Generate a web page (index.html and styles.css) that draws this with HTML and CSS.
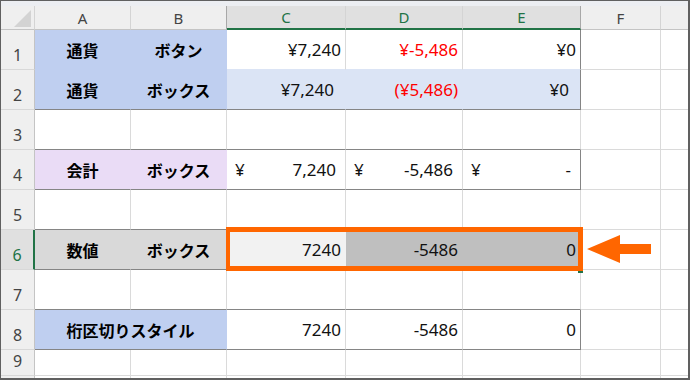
FILE: index.html
```html
<!DOCTYPE html>
<html lang="ja">
<head>
<meta charset="utf-8">
<title>Sheet</title>
<link rel="stylesheet" href="styles.css">
</head>
<body>
<div class="sheet">
  <div class="strip"></div>
  <div class="grid">
    <div class="cell hd corner"><svg class="tri" width="33" height="23" viewBox="0 0 33 23"><polygon points="30,4 30,21 13,21" fill="#d3d3d3"/></svg></div>
    <div class="cell hd">A</div>
    <div class="cell hd selL">B</div>
    <div class="cell hd sel">C</div>
    <div class="cell hd sel">D</div>
    <div class="cell hd sel selR">E</div>
    <div class="cell hd">F</div>
    <div class="cell hd g"></div>

    <div class="cell rh">1</div>
    <div class="cell jp blue">通貨</div>
    <div class="cell jp blue">ボタン</div>
    <div class="cell num bblb">¥7,240</div>
    <div class="cell num red bblb">¥-5,486</div>
    <div class="cell num bblb dr">¥0</div>
    <div class="cell"></div>
    <div class="cell g"></div>

    <div class="cell rh">2</div>
    <div class="cell jp blue db">通貨</div>
    <div class="cell jp blue db">ボックス</div>
    <div class="cell num lblue db pp">¥7,240</div>
    <div class="cell num lblue red db">(¥5,486)</div>
    <div class="cell num lblue db dr pp">¥0</div>
    <div class="cell"></div>
    <div class="cell g"></div>

    <div class="cell rh">3</div>
    <div class="cell db"></div>
    <div class="cell db"></div>
    <div class="cell db"></div>
    <div class="cell db"></div>
    <div class="cell db"></div>
    <div class="cell"></div>
    <div class="cell g"></div>

    <div class="cell rh">4</div>
    <div class="cell jp lav db">会計</div>
    <div class="cell jp lav db">ボックス</div>
    <div class="cell acc db"><span>¥</span><span>7,240</span></div>
    <div class="cell acc db"><span>¥</span><span>-5,486</span></div>
    <div class="cell acc db dr"><span>¥</span><span>-</span></div>
    <div class="cell"></div>
    <div class="cell g"></div>

    <div class="cell rh">5</div>
    <div class="cell db"></div>
    <div class="cell db"></div>
    <div class="cell db"></div>
    <div class="cell db"></div>
    <div class="cell db"></div>
    <div class="cell"></div>
    <div class="cell g"></div>

    <div class="cell rh rsel">6</div>
    <div class="cell jp gray db">数値</div>
    <div class="cell jp gray db">ボックス</div>
    <div class="cell num lgray db">7240</div>
    <div class="cell num dgray db">-5486</div>
    <div class="cell num dgray db dr">0</div>
    <div class="cell"></div>
    <div class="cell g"></div>

    <div class="cell rh">7</div>
    <div class="cell db"></div>
    <div class="cell db"></div>
    <div class="cell db"></div>
    <div class="cell db"></div>
    <div class="cell db"></div>
    <div class="cell"></div>
    <div class="cell g"></div>

    <div class="cell rh">8</div>
    <div class="cell jp blue db span2">桁区切りスタイル</div>
    <div class="cell num db">7240</div>
    <div class="cell num db">-5486</div>
    <div class="cell num db dr">0</div>
    <div class="cell"></div>
    <div class="cell g"></div>

    <div class="cell rh">9</div>
    <div class="cell"></div>
    <div class="cell"></div>
    <div class="cell"></div>
    <div class="cell"></div>
    <div class="cell"></div>
    <div class="cell"></div>
    <div class="cell g"></div>

    <div class="cell rh last"></div>
    <div class="cell last"></div>
    <div class="cell last"></div>
    <div class="cell last"></div>
    <div class="cell last"></div>
    <div class="cell last"></div>
    <div class="cell last"></div>
    <div class="cell g last"></div>
  </div>

  <div class="handle"></div>
  <div class="selbox"></div>
  <svg class="arrow" width="66" height="30" viewBox="0 0 66 30">
    <polygon points="1,15 34,1 34,10 65,10 65,20 34,20 34,29" fill="#ff6600"/>
  </svg>
</div>
</body>
</html>
```

FILE: styles.css
```css
* { box-sizing: border-box; }
html, body { margin: 0; padding: 0; background: #ffffff; }

.sheet {
  position: relative;
  width: 690px;
  height: 380px;
  border-top: 1px solid #606060;
  border-left: 1px solid #606060;
  border-right: 2px solid #606060;
  border-bottom: 2px solid #606060;
  overflow: hidden;
  background: #ffffff;
}

.strip { height: 5px; background: #eceef2; }

.grid {
  display: grid;
  grid-template-columns: 34px 96px 96px 119px 117px 118px 80px 27px;
  grid-template-rows: 24px repeat(8, 40px) 26px 2px;
}

.cell {
  border-right: 1px solid #dadada;
  border-bottom: 1px solid #dadada;
  display: flex;
  align-items: center;
  padding: 0 4px;
  font-family: "Noto Sans", "Open Sans", sans-serif;
  font-size: 17px;
  color: #111111;
  white-space: nowrap;
  overflow: hidden;
}

.g { border-right: none; }
.last { border-bottom: none; }

/* headers */
.hd {
  background: #efefef;
  border-right-color: #d4d4d4;
  border-bottom-color: #c4c4c4;
  justify-content: center;
  font-size: 15px;
  color: #444444;
  padding: 0;
}
.hd.selL { border-right-color: #a8a8a8; }
.hd.sel {
  background: #e0e0e0;
  color: #217346;
  border-bottom: 2px solid #217346;
}
.hd.selR { border-right-color: #a8a8a8; }
.corner { padding: 0; align-items: flex-start; justify-content: flex-start; }
.tri { display: block; }

.rh {
  background: #efefef;
  border-right-color: #c4c4c4;
  border-bottom-color: #d8d8d8;
  justify-content: center;
  align-items: flex-end;
  padding: 0 0 3px 0;
  font-size: 16px;
  color: #444444;
}
.rh.rsel {
  background: #e0e0e0;
  color: #217346;
  border-right: 2px solid #217346;
}

/* content */
.num { justify-content: flex-end; }
.pp { padding-right: 11px; }
.red { color: #ff0000; }
.acc { justify-content: space-between; padding: 0 9px 0 8px; }

.jp {
  justify-content: center;
  font-family: "Noto Sans CJK JP", "Noto Sans", sans-serif;
  font-weight: 700;
  font-size: 16px;
  color: #000000;
}
.span2 { grid-column: span 2; }

/* fills */
.blue { background: #bfcff0; border-color: #bfcff0; }
.lblue { background: #dbe4f5; border-color: #dbe4f5; }
.lav { background: #eadcf6; border-color: #eadcf6; }
.gray { background: #d9d9d9; border-color: #d9d9d9; }
.lgray { background: #f2f2f2; border-color: #f2f2f2; }
.dgray { background: #bfbfbf; border-color: #bfbfbf; }

.bblb { border-bottom-color: #dbe4f5; }

/* range borders */
.db { border-bottom-color: #858585; }
.dr { border-right-color: #858585; }

/* overlays */
.selbox {
  position: absolute;
  left: 225px;
  top: 226px;
  width: 357px;
  height: 44px;
  border: 5px solid #ff6600;
  border-left-width: 4px;
}
.handle {
  position: absolute;
  left: 577px;
  top: 268px;
  width: 5px;
  height: 4px;
  background: #217346;
}
.arrow {
  position: absolute;
  left: 585px;
  top: 233px;
  display: block;
}
```
